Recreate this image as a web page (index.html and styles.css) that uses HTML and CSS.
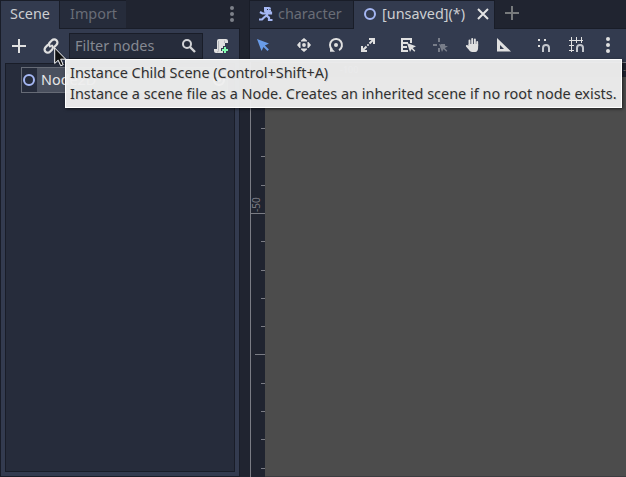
FILE: index.html
```html
<!DOCTYPE html>
<html lang="en">
<head>
<meta charset="utf-8">
<title>Scene editor</title>
<link rel="stylesheet" href="styles.css">
</head>
<body>
<div class="editor">
  <aside class="dock">
    <header class="dock-tabs">
      <div class="dock-tab active">Scene</div>
      <div class="dock-tab import">Import</div>
      <svg class="dock-menu" width="8" height="18" viewBox="0 0 8 18"><g fill="#7d818a"><circle cx="4" cy="2" r="2"/><circle cx="4" cy="8" r="2"/><circle cx="4" cy="14" r="2"/></g></svg>
    </header>
    <section class="dock-body">
      <div class="tree-tools">
        <svg class="add" width="16" height="16" viewBox="0 0 16 16"><path d="M8 1v14M1 8h14" stroke="#e0e0e0" stroke-width="2"/></svg>
        <svg class="link" width="16" height="16" viewBox="0 0 16 16"><g fill="none" stroke="#e0e0e0" stroke-width="2.300" stroke-linecap="round"><path d="M7 8.300 6.500 7.500a2.400 2.400 0 0 1 .3-3l2.200-2.200a3 3 0 0 1 4.500 4.400L11.300 9"/><path d="m9 7.700.5.800a2.400 2.400 0 0 1-.3 3L7 13.700a3 3 0 0 1-4.500-4.400L4.700 7"/></g></svg>
        <div class="filter"><span>Filter nodes</span>
          <svg width="16" height="16" viewBox="0 0 16 16"><circle cx="6" cy="6" r="4" fill="none" stroke="#d2d3d6" stroke-width="2"/><path d="m9 9 5 5" stroke="#d2d3d6" stroke-width="2.400"/></svg>
        </div>
        <svg class="script" width="16" height="16" viewBox="0 0 16 16"><path d="M6 1h7a2 2 0 0 1 2 2v2h-3v3h-2v2H8v3h2v2H3a2 2 0 0 1-2-2v-2h3V3a2 2 0 0 1 2-2Z" fill="#e0e0e0"/><path d="M5.500 3v9.500a1.500 1.500 0 0 1-1.500 1.500M11.500 2.500V5" fill="none" stroke="#b5b7bb"/><path d="M12 9v6M9 12h6" stroke="#84ffb1" stroke-width="2"/></svg>
      </div>
      <div class="tree">
        <div class="tree-row"><svg width="15" height="16" viewBox="1 0 15 16"><circle cx="8" cy="8" r="5" fill="none" stroke="#a5b7f3" stroke-width="2"/></svg><span>Node2D</span><svg class="eye" width="16" height="16" viewBox="0 0 16 16"><circle cx="8" cy="8" r="5" fill="none" stroke="#fff" stroke-width="2"/><circle cx="8" cy="8" r="2" fill="#fff"/></svg></div>
      </div>
    </section>
  </aside>
  <main class="main">
    <header class="scene-tabs">
      <div class="scene-tab">
        <svg width="16" height="16" viewBox="0 0 16 16"><g fill="none" stroke="#a5b7f3" stroke-width="2.200"><path d="M9 6v4M10 7.500h3V5.500M9 7.500H4.500L2 6M8.500 9.500 6 11.500 4 13.500H1M9 10l2 1.500v2.500h3.500"/></g><path d="M6 1h5a2 2 0 0 1 2 2v2a2 2 0 0 1-2 2H8a2 2 0 0 1-2-2Z" fill="#a5b7f3"/><path d="M9 3h1v1H9ZM11.500 3h1v1h-1Z" fill="#262c3b"/></svg>
        <span>character</span>
      </div>
      <div class="scene-tab current">
        <svg width="16" height="16" viewBox="0 0 16 16"><circle cx="8" cy="8" r="5" fill="none" stroke="#a5b7f3" stroke-width="2"/></svg>
        <span>[unsaved](*)</span>
        <svg class="close" width="12" height="12" viewBox="0 0 12 12"><path d="m1 1 10 10M11 1 1 11" stroke="#e4e4e4" stroke-width="2"/></svg>
      </div>
      <svg class="new-tab" width="14" height="14" viewBox="0 0 14 14"><path d="M7 0v14M0 7h14" stroke="#777a7c" stroke-width="2"/></svg>
    </header>
    <nav class="toolbar">
      <svg class="tool" viewBox="0 0 16 16"><path d="m2 2 4.500 12 2-4 4 4 1.400-1.400-4-4L14 6.500Z" fill="#699ce8"/></svg>
      <i class="sep s1"></i>
      <svg class="tool t2" viewBox="0 0 16 16"><g fill="#e0e0e0"><circle cx="8" cy="8" r="1.900"/><path d="M8 1l3 2.500V4.500H5V3.500ZM8 15l3-2.500V11.500H5v1ZM1 8l2.500-3h1v6h-1ZM15 8l-2.500-3h-1v6h1Z"/></g></svg>
      <svg class="tool" viewBox="0 0 16 16"><path d="M11 13.200A6 6 0 1 0 4 12.500" fill="none" stroke="#e0e0e0" stroke-width="2"/><path d="M2 9.500 7 14.800H2Z" fill="#e0e0e0"/><circle cx="8" cy="8" r="2" fill="#e0e0e0"/></svg>
      <svg class="tool" viewBox="0 0 16 16"><path d="M9 2h5v5M2 9v5h5M13 3 9.500 6.500M3 13l3.500-3.500" fill="none" stroke="#e0e0e0" stroke-width="2"/><circle cx="8" cy="8" r="1" fill="#e0e0e0"/></svg>
      <i class="sep s2"></i>
      <svg class="tool t5" viewBox="0 0 16 16"><path d="M1 1h11v5h-2V3H3v2h5v2H3v2h4v2H3v2h5v2H1Z" fill="#e0e0e0"/><path d="m7 6 3 9 1.600-3 2.700 2.700 1-1-2.600-2.700L16 9.300Z" fill="#e0e0e0"/></svg>
      <svg class="tool faded" viewBox="0 0 16 16"><path d="M7 1v4M1 8h4M7 11v4M9 8h4" stroke="#e0e0e0" stroke-width="2"/><path d="m7 7 3 8 1.600-3 2.700 2.700 1-1-2.600-2.700L16 9.500Z" fill="#e0e0e0"/></svg>
      <svg class="tool t7" viewBox="0 0 16 16"><path d="M5.500 10V3.500M8.200 8V2M10.900 8V2.500M13.200 9V5" stroke="#e0e0e0" stroke-width="1.900" stroke-linecap="round"/><path d="M4.600 7h9.500v4c0 2-1 4-3 4H8C6 15 4.500 12 2 9.500 1.500 8 3.300 7.500 4.600 9Z" fill="#e0e0e0"/></svg>
      <svg class="tool t8" viewBox="0 0 16 16"><path fill-rule="evenodd" d="M1 1v13.500h14Zm3 7 4 4H4Z" fill="#e0e0e0"/></svg>
      <i class="sep s3"></i>
      <svg class="tool t9" viewBox="0 0 16 16"><path d="M2 3h2M8 3h2M2 9h2" stroke="#e0e0e0" stroke-width="2"/><path d="M7 15v-4a3 3 0 0 1 6 0v4" fill="none" stroke="#c4c7cd" stroke-width="2"/></svg>
      <svg class="tool t10" viewBox="0 0 16 16"><path d="M3.500 0v15M8.500 0v6M13.500 0v6M1 3.500h14M1 8.500h5M1 13.500h5" stroke="#e0e0e0"/><path d="M9 15v-4a3 3 0 0 1 6 0v4" fill="none" stroke="#c4c7cd" stroke-width="2"/></svg>
      <svg class="tool t11" viewBox="0 0 16 16"><g fill="#e0e0e0"><circle cx="8" cy="2" r="2"/><circle cx="8" cy="8" r="2"/><circle cx="8" cy="14" r="2"/></g></svg>
    </nav>
    <section class="viewport">
      <svg class="ruler" width="14" height="415" viewBox="1 0 14 415"><path d="M11 66.500h4M11 94.500h4M11 123.500h4M0 151.500h15M11 179.500h4M11 208.500h4M11 236.500h4M11 264.500h4M5 292.500h10M11 321.500h4M11 349.500h4M11 377.500h4M11 406.500h4" stroke="#7a7c84"/><text x="-150" y="10" transform="rotate(-90)">-50</text></svg>
      <div class="canvas"><div class="top-ruler"><span>-100</span><span>-5</span></div></div>
    </section>
  </main>
</div>
<div class="tooltip"><div>Instance Child Scene (Control+Shift+A)</div><div class="detail">Instance a scene file as a Node. Creates an inherited scene if no root node exists.</div></div>
<svg class="cursor" width="13" height="20" viewBox="0 0 13 20"><path d="M.7 1v15.500l3.500-3.300 2.500 5.500 2.500-1-2.500-5.500h5Z" fill="#111" stroke="#fff"/></svg>
</body>
</html>
```
FILE: styles.css
```css
* { box-sizing: border-box; }
body {
  margin: 0;
  width: 626px;
  height: 477px;
  overflow: hidden;
  font: 14.4px/20px "Noto Sans", sans-serif;
  color: #cdcfd2;
  background: #202430;
}
svg { display: block; flex: none; }
.editor { display: grid; grid-template-columns: 240px 1fr; height: 477px; }
.dock { display: flex; flex-direction: column; }
.dock-tabs { display: flex; height: 28px; }
.dock-tab.active {
  width: 59px;
  height: 29px;
  background: #333b4f;
  border: solid #191d28;
  border-width: 1px 0 0 1px;
  padding: 3px 0 0 9px;
  position: relative;
}
.dock-tab.import {
  width: 67px;
  height: 28px;
  color: #696d77;
  background: #262c3b;
  border: solid #191d28;
  border-width: 1px 0 0 1px;
  padding: 3px 0 0 10px;
}
.dock-menu { margin: 6px 0 0 102px; }
.dock-body {
  flex: 1;
  display: flex;
  flex-direction: column;
  background: #333b4f;
  border: 1px solid #191d28;
  padding: 4px;
}
.tree-tools { display: flex; height: 26px; }
.add { margin: 5px 0 0 6px; }
.link { margin: 5px 0 0 16px; }
.filter {
  display: flex;
  justify-content: space-between;
  width: 134px;
  height: 26px;
  margin-left: 10px;
  padding: 2px 5px 0 5px;
  color: #858992;
  background: #262c3b;
  border: 1px solid #191d28;
}
.filter svg { margin-top: 2px; }
.script { margin: 5px 0 0 10px; }
.tree {
  flex: 1;
  margin-top: 4px;
  padding: 3px 6px 3px 15px;
  background: #262c3b;
  border: 1px solid #191d28;
}
.tree-row {
  display: flex;
  height: 26px;
  border: 1px solid #666b76;
  color: #e6e6e7;
  background: #4a505e;
}
.tree-row svg { height: 24px; background: #262c3b; }
.tree-row .eye { background: none; }
.tree-row span { flex: 1; padding: 2px 4px; }
.main { padding-left: 9px; display: flex; flex-direction: column; min-width: 0; }
.scene-tabs { display: flex; height: 28px; }
.scene-tab {
  display: flex;
  width: 104px;
  height: 28px;
  padding: 3px 0 0 8px;
  color: #696d77;
  background: #262c3b;
  border: solid #191d28;
  border-width: 1px 0 0 1px;
}
.scene-tab svg { margin-top: 2px; }
.scene-tab span { margin-left: 4px; }
.scene-tab.current {
  width: 142px;
  height: 29px;
  color: #cdcfd2;
  background: #333b4f;
  border-right-width: 1px;
  position: relative;
}
.scene-tab .close { margin: 4px 0 0 12px; }
.new-tab { margin: 6px 0 0 10px; }
.toolbar {
  display: flex;
  height: 34px;
  background: #333b4f;
  border: solid #191d28;
  border-width: 1px 0 0 1px;
  padding: 8px 0 0 5px;
}
.tool { width: 16px; height: 16px; margin-right: 16px; }
.faded { opacity: .4; }
.sep { width: 1px; height: 26px; margin-top: -5px; background: #4a5160; }
.s1 { margin-left: -4px; margin-right: 13px; }
.s2 { margin-left: -5px; margin-right: 13px; }
.s3 { margin-left: -5px; margin-right: 13px; }
.viewport {
  flex: 1;
  display: grid;
  grid-template-columns: 14px 1fr;
  border-left: 1px solid #7a7c84;
  margin-left: 1px;
  background: #202430;
}
.ruler text { font: 10px "Noto Sans", sans-serif; fill: #7a7c84; }
.canvas { background: #4c4c4c; border-bottom: 1px solid #3b3c40; }
.top-ruler {
  display: flex;
  justify-content: space-between;
  height: 15px;
  padding-left: 75px;
  font-size: 9px;
  line-height: 14px;
  color: #7a7c84;
  background: #202430;
  border-top: 1px solid #7a7c84;
}
.top-ruler span:last-child { width: 3px; overflow: hidden; }
.tooltip {
  position: absolute;
  left: 65px;
  top: 59px;
  width: 557px;
  height: 49px;
  padding: 2px 4px;
  line-height: 21px;
  white-space: nowrap;
  color: #303030;
  background: rgba(238, 238, 238, .965);
  border: 1px solid #fff;
  box-shadow: 1px 1px 3px #0009;
  text-shadow: 1px 1px 0 #0000001a;
}
.detail { letter-spacing: .025px; }
.cursor { position: absolute; left: 54px; top: 47px; }
```
